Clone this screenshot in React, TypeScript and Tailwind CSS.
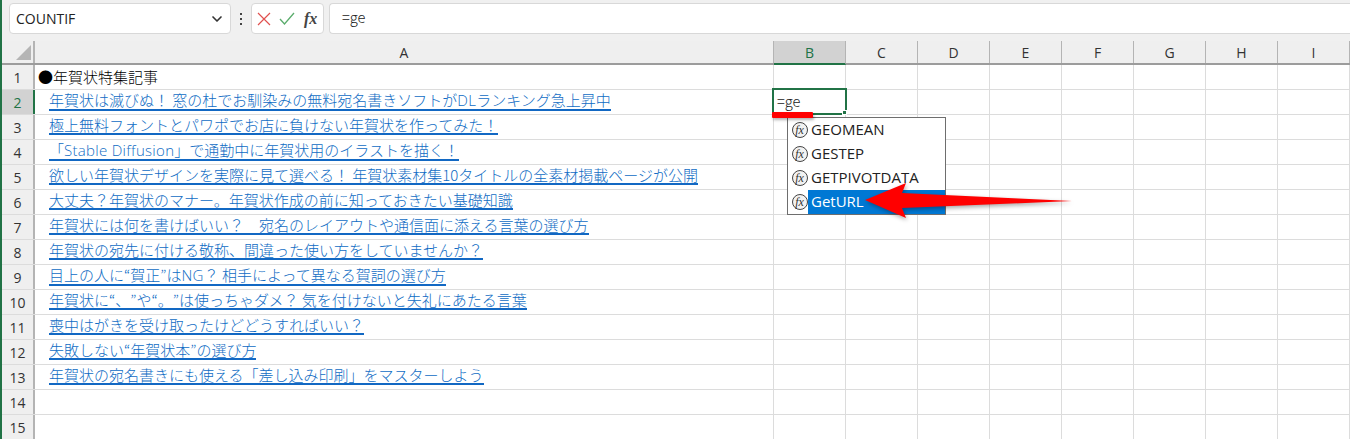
import type { ReactNode } from "react";
import { ChevronDown } from "lucide-react";

const columns = ["B", "C", "D", "E", "F", "G", "H", "I"];

function Latin({ children }: { children: ReactNode }) {
  return <span className="font-['Open_Sans',sans-serif] tracking-[0.3px]">{children}</span>;
}

const rows: { text: ReactNode; link: boolean }[] = [
  { text: "●年賀状特集記事", link: false },
  { text: <>年賀状は滅びぬ！ 窓の杜でお馴染みの無料宛名書きソフトが<Latin>DL</Latin>ランキング急上昇中</>, link: true },
  { text: "極上無料フォントとパワポでお店に負けない年賀状を作ってみた！", link: true },
  { text: <>「<Latin>Stable Diffusion</Latin>」で通勤中に年賀状用のイラストを描く！</>, link: true },
  { text: "欲しい年賀状デザインを実際に見て選べる！ 年賀状素材集10タイトルの全素材掲載ページが公開", link: true },
  { text: "大丈夫？年賀状のマナー。年賀状作成の前に知っておきたい基礎知識", link: true },
  { text: "年賀状には何を書けばいい？　宛名のレイアウトや通信面に添える言葉の選び方", link: true },
  { text: "年賀状の宛先に付ける敬称、間違った使い方をしていませんか？", link: true },
  { text: <>目上の人に“賀正”は<Latin>NG</Latin>？ 相手によって異なる賀詞の選び方</>, link: true },
  { text: "年賀状に“、”や“。”は使っちゃダメ？ 気を付けないと失礼にあたる言葉", link: true },
  { text: "喪中はがきを受け取ったけどどうすればいい？", link: true },
  { text: "失敗しない“年賀状本”の選び方", link: true },
  { text: "年賀状の宛名書きにも使える「差し込み印刷」をマスターしよう", link: true },
  { text: "", link: false },
  { text: "", link: false },
];

const suggestions = ["GEOMEAN", "GESTEP", "GETPIVOTDATA", "GetURL"];

function FnIcon() {
  return (
    <span className="flex h-[16px] w-[16px] shrink-0 items-center justify-center rounded-full border-[1.5px] border-[#444] bg-[#f2f2f2] pr-[1px] font-['Liberation_Serif',serif] text-[12px] italic leading-none text-[#333]">
      fx
    </span>
  );
}

function FormulaBar() {
  return (
    <div className="flex h-[41px] items-start bg-[#f0f0f0] pt-[3px]">
      <div className="ml-[7px] flex h-[31px] w-[222px] items-center justify-between rounded-[4px] border border-[#d8d8d8] bg-white pl-[6px] pr-[5px] font-['Open_Sans',sans-serif] text-[14px] text-[#222]">
        COUNTIF
        <ChevronDown className="h-4 w-4 text-[#333]" strokeWidth={2.5} />
      </div>
      <div className="flex h-[31px] w-[20px] flex-col items-center justify-center gap-[3px]">
        <span className="h-[2px] w-[2px] bg-[#444]" />
        <span className="h-[2px] w-[2px] bg-[#444]" />
        <span className="h-[2px] w-[2px] bg-[#444]" />
      </div>
      <div className="flex h-[31px] w-[73px] items-center rounded-[4px] border border-[#d8d8d8] bg-white pl-[5px]">
        <svg width="14" height="14" viewBox="0 0 14 14" fill="none" stroke="#e0514f" strokeWidth="1.2">
          <path d="M1 1l12 12M13 1L1 13" />
        </svg>
        <svg className="ml-[8px]" width="16" height="13" viewBox="0 0 16 13" fill="none" stroke="#5aac6c" strokeWidth="1.3">
          <path d="M1 7l4.5 5L15 1" />
        </svg>
        <span className="ml-[9px] font-['Liberation_Serif',serif] text-[16px] font-bold italic leading-none text-[#444]">
          fx
        </span>
      </div>
      <div className="ml-[5px] flex h-[31px] flex-1 items-center rounded-l-[4px] border border-r-0 border-[#d8d8d8] bg-white pb-[3px] pl-[12px] font-['Noto_Sans_CJK_JP',sans-serif] text-[14.67px] font-light text-[#222]">
        =ge
      </div>
    </div>
  );
}

function ColumnHeaders() {
  return (
    <div className="flex h-[24px] border-b-2 border-[#9c9c9c] bg-[#efefef] font-['Open_Sans',sans-serif] text-[14px] text-[#333]">
      <div className="relative w-[33px] shrink-0 border-r-2 border-[#b4b4b4]">
        <span className="absolute bottom-[3px] right-[2px] h-0 w-0 border-b-[15px] border-l-[15px] border-b-[#b5b5b5] border-l-transparent" />
      </div>
      <div className="flex w-[739px] shrink-0 items-center justify-center border-r border-[#b4b4b4]">A</div>
      {columns.map((c) => (
        <div
          key={c}
          className={
            c === "B"
              ? "-mb-[2px] flex w-[72px] shrink-0 items-center justify-center border-b-2 border-r border-b-[#217346] border-r-[#b4b4b4] bg-[#d2d2d2] text-[#217346]"
              : "flex w-[72px] shrink-0 items-center justify-center border-r border-[#b4b4b4]"
          }
        >
          {c}
        </div>
      ))}
    </div>
  );
}

function Row({ index, text, link }: { index: number; text: ReactNode; link: boolean }) {
  const active = index === 2;
  return (
    <div className="flex h-[25px] border-b border-[#dcdcdc]">
      <div
        className={
          active
            ? "flex w-[33px] shrink-0 items-center justify-center border-r-2 border-[#217346] bg-[#d2d2d2] font-['Open_Sans',sans-serif] text-[14px] text-[#217346]"
            : "flex w-[33px] shrink-0 items-center justify-center border-r-2 border-[#b4b4b4] bg-[#efefef] font-['Open_Sans',sans-serif] text-[14px] text-[#333]"
        }
      >
        {index}
      </div>
      <div className="flex w-[739px] shrink-0 items-center border-r border-[#dcdcdc] pb-[2px] font-['Noto_Sans_CJK_JP',sans-serif] text-[15px] font-light leading-none [text-spacing-trim:space-all]">
        {link ? (
          <span className="ml-[14px] whitespace-pre border-b-2 border-[#1268c3] pb-[1px] text-[#0f6cc4]">{text}</span>
        ) : (
          <span className="ml-[3px] whitespace-pre text-black">{text}</span>
        )}
      </div>
      {columns.map((c) => (
        <div key={c} className="w-[72px] shrink-0 border-r border-[#dcdcdc]" />
      ))}
    </div>
  );
}

function Suggestions() {
  return (
    <div className="absolute left-[785px] top-[117px] w-[159px] border border-[#6e6e6e] bg-white font-['Open_Sans',sans-serif] text-[15px] text-[#222]">
      {suggestions.map((s, i) => (
        <div key={s} className="flex h-[24px] items-center pl-[4px]">
          <FnIcon />
          <span
            className={
              i === 3
                ? "flex h-full flex-1 items-center bg-[#0078d4] pb-[2px] pl-[3px] text-white"
                : "pb-[2px] pl-[3px]"
            }
          >
            {s}
          </span>
        </div>
      ))}
    </div>
  );
}

export default function App() {
  return (
    <div className="relative h-[439px] w-[1350px] overflow-hidden border-l-2 border-[#217346] bg-white">
      <FormulaBar />
      <ColumnHeaders />
      {rows.map((r, i) => (
        <Row key={i} index={i + 1} text={r.text} link={r.link} />
      ))}

      {/* Cell being edited */}
      <div className="absolute left-[770px] top-[88px] flex h-[27px] w-[75px] items-center border-2 border-[#217346] bg-white pb-[2px] pl-[3px] font-['Noto_Sans_CJK_JP',sans-serif] text-[14.67px] font-light text-[#222]">
        =ge
        <span className="absolute -bottom-[2px] -right-[2px] h-[5px] w-[5px] border border-white bg-[#217346]" />
      </div>
      <Suggestions />

      {/* Red annotations */}
      <span className="absolute left-[770px] top-[112px] h-[6px] w-[41px] rounded-[1px] bg-[#ff0000] shadow-[1px_2px_3px_rgba(0,0,0,0.3)]" />
      <svg className="absolute left-[860px] top-[180px] drop-shadow-[1px_2px_2px_rgba(0,0,0,0.35)]" width="214" height="42" viewBox="0 0 214 42">
        <path d="M3 20 L44 3 L40 13 L210 21 L40 28 L44 38 Z" fill="#ff0000" />
      </svg>
    </div>
  );
}
